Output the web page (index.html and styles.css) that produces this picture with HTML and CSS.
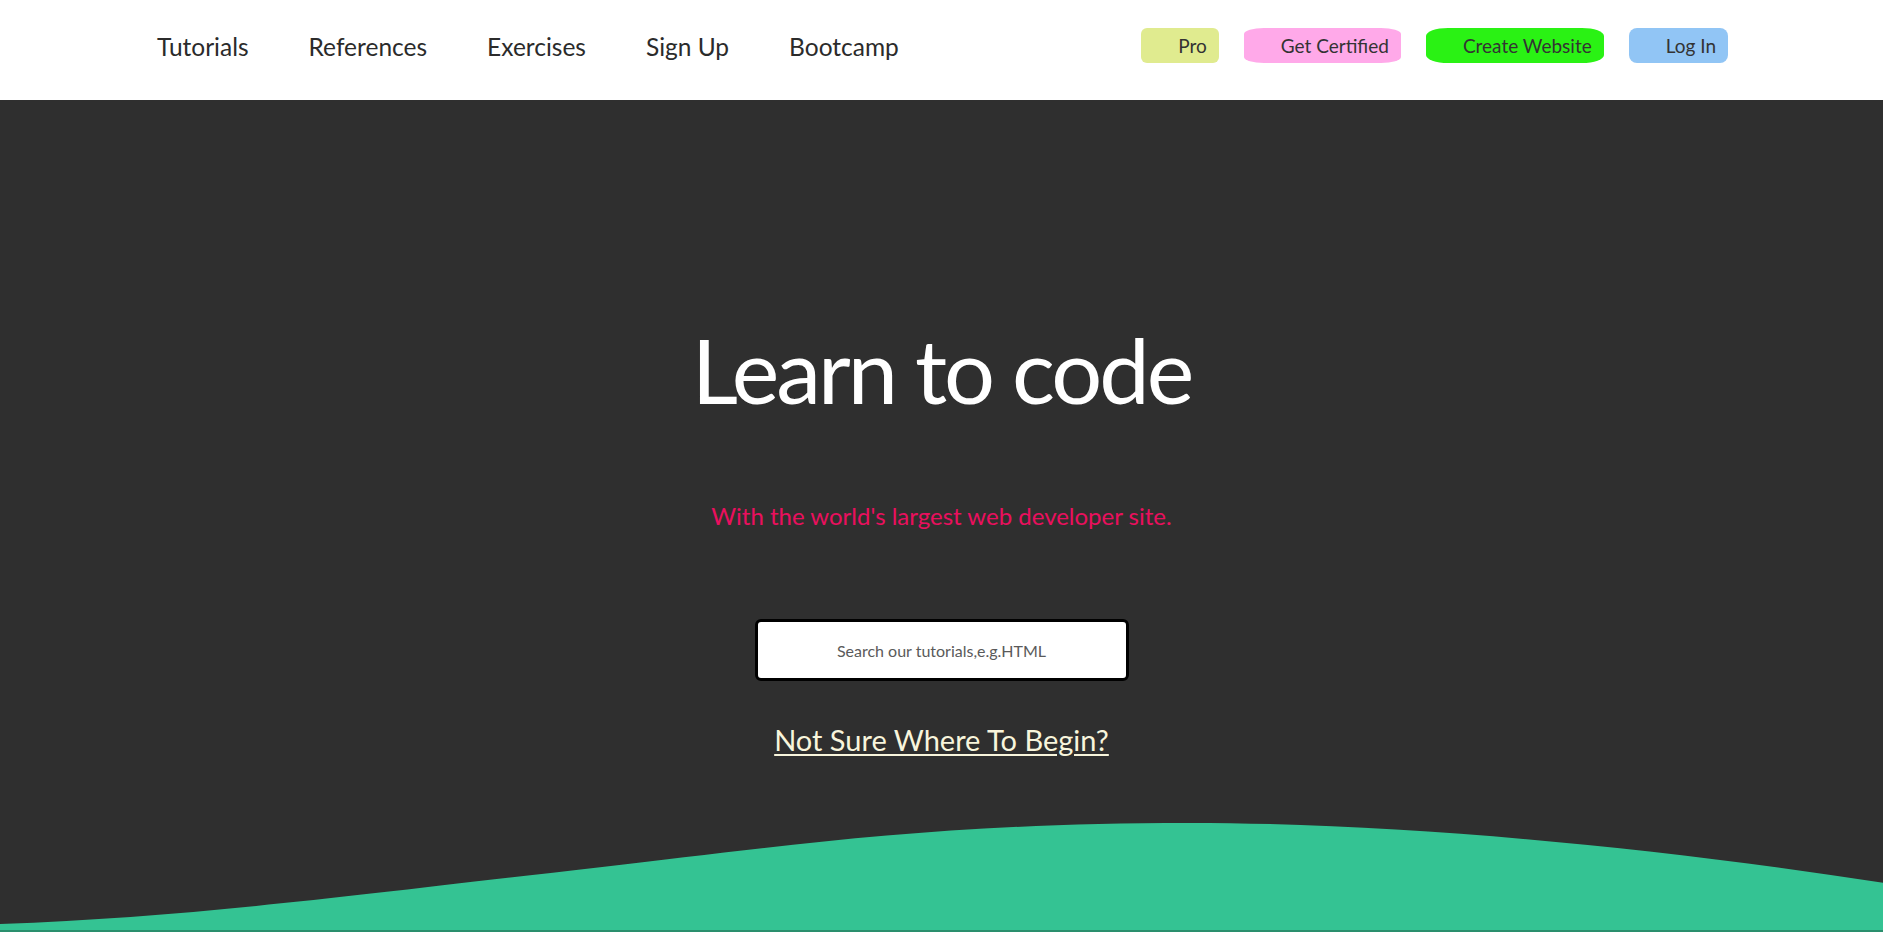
FILE: index.html
```html
<!DOCTYPE html>
<html lang="en">
<head>
<meta charset="utf-8">
<title>Learn to code</title>
<link rel="stylesheet" href="styles.css">
</head>
<body>
<header class="topbar">
  <nav class="mainnav">
    <a class="navlink" href="#">Tutorials</a>
    <a class="navlink" href="#">References</a>
    <a class="navlink" href="#">Exercises</a>
    <a class="navlink" href="#">Sign Up</a>
    <a class="navlink" href="#">Bootcamp</a>
  </nav>
  <div class="actions">
    <a class="btn btn-pro" href="#">Pro</a>
    <a class="btn btn-cert" href="#">Get Certified</a>
    <a class="btn btn-create" href="#">Create Website</a>
    <a class="btn btn-login" href="#">Log In</a>
  </div>
</header>
<main class="hero">
  <div class="hero-content">
    <h1 class="title">Learn to code</h1>
    <p class="subtitle">With the world's largest web developer site.</p>
    <input class="search" type="text" placeholder="Search our tutorials,e.g.HTML">
    <a class="begin" href="#">Not Sure Where To Begin?</a>
  </div>
  <svg class="wave" viewBox="0 0 1883 110" preserveAspectRatio="none" aria-hidden="true">
    <path d="M0,104 C200,96 350,75 600,46 C800,22 950,1 1189,1 C1400,1 1650,25 1883,62 L1883,110 L0,110 Z" fill="#34c393"/>
  </svg>
</main>
</body>
</html>
```

FILE: styles.css
```css
* { box-sizing: border-box; }
html, body { margin: 0; padding: 0; }
body {
  font-family: Lato, "Open Sans", sans-serif;
  background: #2f2f2f;
  height: 932px;
  overflow: hidden;
}
.topbar {
  height: 100px;
  background: #ffffff;
  display: flex;
  align-items: center;
  padding: 0 155px 8px 157px;
}
.mainnav {
  display: flex;
  gap: 60px;
}
.navlink {
  color: #2b2b2b;
  text-decoration: none;
  font-size: 24.5px;
}
.actions {
  display: flex;
  gap: 25px;
  margin-left: auto;
  margin-top: -2px;
}
.btn {
  display: block;
  height: 35px;
  line-height: 35px;
  padding: 0 12px 0 37px;
  font-size: 19px;
  color: #333333;
  text-decoration: none;
}
.btn-pro { background: #e0eb8f; border-radius: 6px; }
.btn-cert { background: #ffa9e9; border-radius: 20px / 6px; }
.btn-create { background: #2af214; border-radius: 22px / 8px; }
.btn-login { background: #91c5f5; border-radius: 8px; }
.hero {
  height: 832px;
  display: flex;
  flex-direction: column;
  background: #2f2f2f;
  border-bottom: 2px solid #2a8f6d;
}
.hero-content {
  flex: 1;
  display: flex;
  flex-direction: column;
  align-items: center;
  padding-top: 224px;
}
.title {
  margin: 0;
  font-weight: 400;
  font-size: 90px;
  letter-spacing: -3px;
  line-height: 1;
  color: #ffffff;
}
.subtitle {
  margin: 87px 0 0;
  font-size: 24px;
  color: #ea0f5e;
}
.search {
  margin-top: 89px;
  width: 374px;
  height: 62px;
  border: 3px solid #000000;
  border-radius: 6px;
  background: #ffffff;
  text-align: center;
  font-family: Lato, "Open Sans", sans-serif;
  font-size: 16px;
  color: #555555;
  outline: none;
}
.search::placeholder { color: #5a5a5a; }
.begin {
  margin-top: 41px;
  font-size: 29px;
  color: #f8f5dc;
  text-decoration: underline;
  text-underline-offset: 3px;
}
.wave {
  display: block;
  width: 100%;
  height: 108px;
  flex: none;
}
```
